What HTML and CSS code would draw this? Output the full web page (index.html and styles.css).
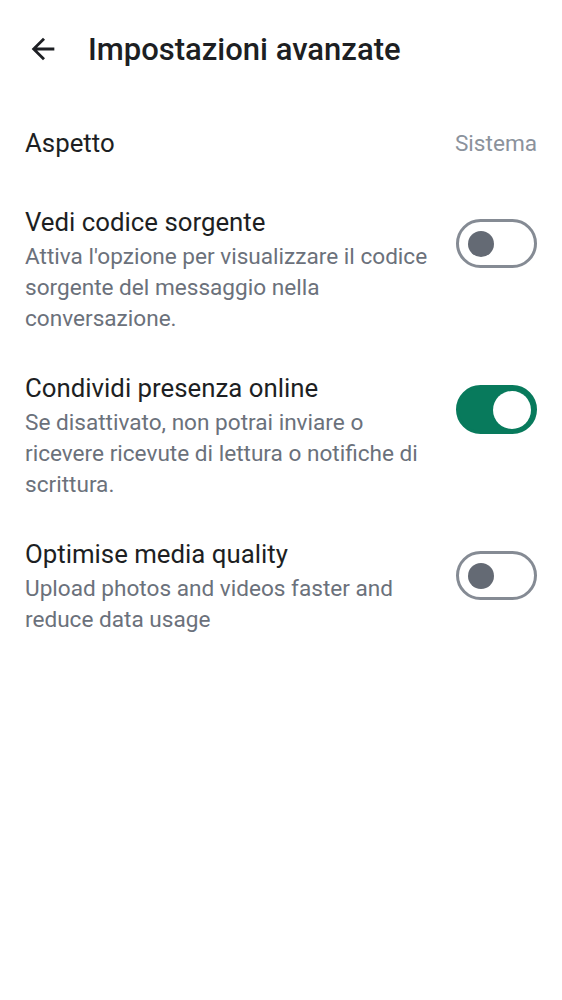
FILE: index.html
```html
<!DOCTYPE html>
<html lang="it">
<head>
<meta charset="utf-8">
<title>Impostazioni avanzate</title>
<link rel="stylesheet" href="styles.css">
</head>
<body>
<header class="topbar">
  <button class="back" aria-label="Indietro">
    <svg viewBox="0 0 24 24" width="34" height="34"><path d="M20 11H7.83l5.59-5.59L12 4l-8 8 8 8 1.41-1.41L7.83 13H20v-2z" fill="#1d1f23"/></svg>
  </button>
  <h1 class="title">Impostazioni avanzate</h1>
</header>
<main class="list">
  <div class="item item-first">
    <div class="text"><div class="label">Aspetto</div></div>
    <div class="value">Sistema</div>
  </div>
  <div class="item">
    <div class="text">
      <div class="label">Vedi codice sorgente</div>
      <div class="desc">Attiva l'opzione per visualizzare il codice sorgente del messaggio nella conversazione.</div>
    </div>
    <div class="toggle"><span class="knob"></span></div>
  </div>
  <div class="item">
    <div class="text">
      <div class="label">Condividi presenza online</div>
      <div class="desc">Se disattivato, non potrai inviare o ricevere ricevute di lettura o notifiche di scrittura.</div>
    </div>
    <div class="toggle on"><span class="knob"></span></div>
  </div>
  <div class="item">
    <div class="text">
      <div class="label">Optimise media quality</div>
      <div class="desc">Upload photos and videos faster and reduce data usage</div>
    </div>
    <div class="toggle"><span class="knob"></span></div>
  </div>
</main>
</body>
</html>
```
FILE: styles.css
```css
* { box-sizing: border-box; }
html, body { margin: 0; padding: 0; background: #ffffff; }
body { font-family: Roboto, "Noto Sans", sans-serif; color: #1d1f23; width: 562px; }

.topbar {
  height: 98px;
  display: flex;
  align-items: center;
  padding-left: 26px;
  gap: 28px;
}
.back {
  border: 0;
  background: none;
  padding: 0;
  width: 34px;
  height: 34px;
  display: flex;
  align-items: center;
  justify-content: center;
}
.title {
  margin: 0;
  font-size: 31px;
  font-weight: 500;
  color: #1d1f23;
}

.list { display: flex; flex-direction: column; }
.item {
  display: flex;
  align-items: flex-start;
  padding: 18px 25px 18px 25px;
}
.item-first {
  padding-top: 27px;
  padding-bottom: 25px;
  align-items: center;
}
.text { flex: 1; min-width: 0; padding-right: 22px; }
.label {
  font-size: 25.8px;
  line-height: 36px;
  color: #1d1f23;
}
.desc {
  font-size: 22.6px;
  line-height: 31px;
  color: #6b717b;
  margin-top: 1px;
}
.value {
  font-size: 22.6px;
  color: #8b929c;
}

.toggle {
  flex: none;
  width: 81px;
  height: 49px;
  margin-top: 15px;
  border: 3px solid #858b94;
  border-radius: 25px;
  display: flex;
  align-items: center;
  padding-left: 9px;
}
.toggle .knob {
  width: 26px;
  height: 26px;
  border-radius: 50%;
  background: #646a74;
}
.toggle.on {
  background: #087a5c;
  border-color: #087a5c;
  justify-content: flex-end;
  padding-left: 0;
  padding-right: 3px;
}
.toggle.on .knob {
  width: 38px;
  height: 38px;
  background: #ffffff;
}
```
